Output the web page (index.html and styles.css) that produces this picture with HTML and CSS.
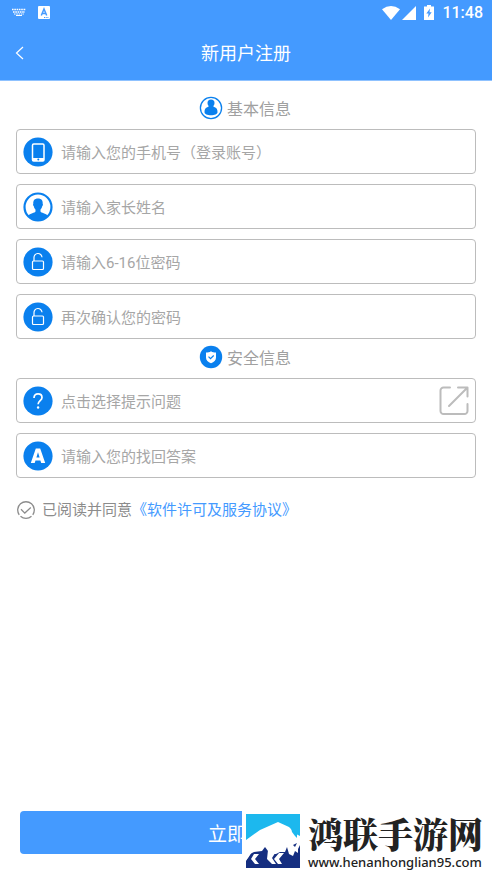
FILE: index.html
```html
<!DOCTYPE html>
<html lang="zh-CN">
<head>
<meta charset="utf-8">
<meta name="viewport" content="width=device-width, initial-scale=1">
<title>新用户注册</title>
<link rel="stylesheet" href="styles.css">
</head>
<body>
<div class="page">
  <header class="header">
    <div class="status">
      <svg class="status-keyboard" width="16" height="9" viewBox="0 0 16 9" fill="none" stroke="#fff" aria-hidden="true">
        <path d="M1 1.5h14M2 4h12" stroke-width="1.5" stroke-dasharray="1.6 .7"/>
        <path d="M3 6h10" stroke-dasharray="1.6 .7"/><path d="M5 7.5h6"/>
      </svg>
      <svg width="12" height="13" viewBox="0 0 12 13" aria-hidden="true">
        <rect width="12" height="13" rx="1" fill="#fff"/>
        <path d="M3.3 9.5 6 3l2.7 6.5M4.4 7.5h3.2" fill="none" stroke="#449aff" stroke-width="1.5"/>
        <path d="M6 11.5h5" stroke="#449aff" stroke-dasharray="1 .7"/>
      </svg>
      <span class="status-right">
        <svg width="18" height="14" viewBox="0 0 18 14" fill="#fff" aria-hidden="true"><path d="M9 14 0 3.2Q9-3 18 3.2Z"/></svg>
        <svg width="14" height="14" viewBox="0 0 14 14" fill="#fff" aria-hidden="true"><path d="M14 0v14H0Z"/></svg>
        <svg class="status-battery" width="10" height="15" viewBox="0 0 10 15" aria-hidden="true"><path d="M0 1.500h3V0h4v1.500h3V15H0Z" fill="#fff"/><path d="M6 3.500 2.300 8.600h2.200L4 12.500l3.700-5.200H5.500Z" fill="#449aff"/></svg>
        <span class="clock">11:48</span>
      </span>
    </div>
    <div class="titlebar">
      <button class="back" type="button" aria-label="返回">
        <svg width="9" height="14" viewBox="0 0 9 14" fill="none" stroke="#fff" stroke-width="1.2" aria-hidden="true"><path d="M8 1 1.500 7 8 13"/></svg>
      </button>
      <h1>新用户注册</h1>
    </div>
  </header>

  <form class="form">
    <h2 class="section">
      <svg width="24" height="24" viewBox="0 0 24 24" aria-hidden="true">
        <circle cx="12" cy="12" r="10.600" fill="none" stroke="#0a80ee" stroke-width="1.300"/>
        <circle cx="12" cy="6.900" r="3.500" fill="#0a80ee"/>
        <path d="M10 9.500h4c.2 1 .8 1.300 1.800 1.700 2 .8 2.800 2.500 2.700 5-.1 1.900-2.800 3-6.500 3s-6.400-1.100-6.500-3c-.1-2.500.7-4.200 2.700-5 1-.4 1.600-.7 1.800-1.700Z" fill="#0a80ee"/>
      </svg>
      基本信息
    </h2>

    <div class="fields">
      <label class="field">
        <svg class="badge" viewBox="0 0 30 30" aria-hidden="true">
          <circle cx="15" cy="15" r="14.600" fill="#0a80ee"/>
          <rect x="9.500" y="7" width="11.500" height="17" rx="1.200" fill="none" stroke="#fff" stroke-width="1.500"/>
          <path d="M9.500 21h11.500v3H9.500Z" fill="#fff"/><circle cx="15.300" cy="22.400" r="1" fill="#0a80ee"/>
        </svg>
        <input type="tel" aria-label="手机号" placeholder="请输入您的手机号（登录账号）">
      </label>
      <label class="field">
        <svg class="badge" viewBox="0 0 30 30" aria-hidden="true">
          <circle cx="15" cy="15" r="13.500" fill="#fff" stroke="#0a80ee" stroke-width="2.200"/>
          <path d="M15 6.500c3.600 0 5 2.200 4.700 5.300.5.600.2 2-.5 2.500-.4 1.800-1 2.700-1.700 3.300v2c.5 1.500 5.500 1.700 7.500 4.400C22.500 27.500 19 29 15 29s-7.500-1.500-10-5c2-2.700 7-2.900 7.500-4.400v-2c-.7-.6-1.300-1.500-1.700-3.300-.7-.5-1-1.900-.5-2.500-.3-3.100 1.100-5.300 4.700-5.300Z" fill="#0a80ee"/>
        </svg>
        <input type="text" aria-label="家长姓名" placeholder="请输入家长姓名">
      </label>
      <label class="field">
        <svg class="badge" viewBox="0 0 30 30" aria-hidden="true">
          <circle cx="15" cy="15" r="14.600" fill="#0a80ee"/>
          <g fill="none" stroke="#fff" stroke-width="1.200"><rect x="9.500" y="14" width="11" height="8.500" rx="1"/><path d="M11 14v-3.200a4 4 0 0 1 8-.6"/></g>
        </svg>
        <input type="password" aria-label="密码" placeholder="请输入6-16位密码">
      </label>
      <label class="field">
        <svg class="badge" viewBox="0 0 30 30" aria-hidden="true">
          <circle cx="15" cy="15" r="14.600" fill="#0a80ee"/>
          <g fill="none" stroke="#fff" stroke-width="1.200"><rect x="9.500" y="14" width="11" height="8.500" rx="1"/><path d="M11 14v-3.200a4 4 0 0 1 8-.6"/></g>
        </svg>
        <input type="password" aria-label="确认密码" placeholder="再次确认您的密码">
      </label>
    </div>

    <h2 class="section">
      <svg width="24" height="24" viewBox="0 0 24 24" aria-hidden="true">
        <circle cx="12" cy="12" r="11.200" fill="#0a80ee"/>
        <path d="M12 6.200c1.500 1 3 1.400 5 1.400v4.800c0 2.800-2 4.600-5 5.900-3-1.300-5-3.100-5-5.900V7.600c2 0 3.500-.4 5-1.400Z" fill="#fff"/>
        <path d="m9.500 11.700 2 2 3.200-3.200" fill="none" stroke="#0a80ee" stroke-width="1.200"/>
      </svg>
      安全信息
    </h2>

    <div class="fields">
      <button class="field" type="button">
        <svg class="badge" viewBox="0 0 30 30" aria-hidden="true">
          <circle cx="15" cy="15" r="14.600" fill="#0a80ee"/>
          <path d="M11 12c0-2.700 1.700-4.200 4-4.200s4 1.400 4 3.600c0 3.100-3.900 3.300-3.900 6.900" fill="none" stroke="#fff" stroke-width="1.700"/>
          <circle cx="15.100" cy="21.500" r="1.200" fill="#fff"/>
        </svg>
        <span class="field-text">点击选择提示问题</span>
        <svg class="open" viewBox="0 0 30 30" fill="none" stroke="#bcbcbc" stroke-width="2" stroke-linecap="round" stroke-linejoin="round" aria-hidden="true">
          <path d="M11 1.500H4.500a3 3 0 0 0-3 3v20.500a3 3 0 0 0 3 3h21a3 3 0 0 0 3-3v-7M19 1.500h9.500v9M28 2 10 20"/>
        </svg>
      </button>
      <label class="field">
        <svg class="badge" viewBox="0 0 30 30" aria-hidden="true">
          <circle cx="15" cy="15" r="14.600" fill="#0a80ee"/>
          <path d="M12.800 7.500h4.400l5 14.500h-4l-.8-2.600h-4.900l-.8 2.600H7.800Zm2.200 3.800-1.600 5.200h3.200Z" fill="#fff" fill-rule="evenodd"/>
        </svg>
        <input type="text" aria-label="找回答案" placeholder="请输入您的找回答案">
      </label>
    </div>

    <div class="agree">
      <input id="agree" class="agree-box" type="checkbox" checked>
      <label class="agree-label" for="agree">
        <svg width="20" height="20" viewBox="0 0 20 20" fill="none" stroke="#8c8c8c" stroke-width="1.300" aria-hidden="true"><path d="M3.200 14.800A8.300 8.300 0 1 1 16.800 14.800M4.500 16.200a8.300 8.300 0 0 0 11 0M5 9.300l3.800 3.800 6-5.600"/></svg>
        已阅读并同意
      </label>
      <a href="#license">《软件许可及服务协议》</a>
    </div>

    <button class="submit" type="submit">立即注册</button>
  </form>

  <aside class="brand">
    <svg class="brand-logo" viewBox="0 0 54 54" aria-hidden="true">
      <path fill="#1cb8ee" d="M0 0H54V30H0Z"/>
      <path fill="#152e80" d="M0 30H54V54H0Z"/>
      <path fill="#fff" d="M0 26 14 16 32 8 43 13 46 16 50 20 54 22V31L52 35V39L49 37 47 42 43 40 41 33 39 38 34 38 30 40H22V37L19 33 16 37 8 38 4 40 0 47Z"/>
      <path fill="#fff" d="M22 36H31L26 44 30 50H26L21 45ZM0 38H6L2 44 0 46ZM8 40H13L9 45 13 50H9L5 45ZM33 39H38L33 45 36 50H32L28 45Z"/>
      <path fill="#1cb8ee" d="M46 9 45 14 46 18 49 22 51 24 51 19 48 17 46 13Z"/>
      <path fill="#152e80" d="M47 31 51 29 49 33Z"/>
    </svg>
    <div class="brand-text">
      <strong>鸿联手游网</strong>
      <span>www.henanhonglian95.com</span>
    </div>
  </aside>
</div>
</body>
</html>
```
FILE: styles.css
```css
* { box-sizing: border-box; }
body {
  margin: 0;
  background: #fff;
  font-family: Roboto, "Noto Sans CJK SC", sans-serif;
}
button, input { font: inherit; }
svg { flex: none; }
.page {
  position: relative;
  display: flex;
  flex-direction: column;
  min-height: 100vh;
}
.header { background: #449aff; color: #fff; border-bottom: 1px solid #8fc2ff; }
.status {
  display: flex;
  align-items: center;
  gap: 11px;
  height: 25px;
  padding: 0 9px 0 11px;
}
.status-right { display: flex; align-items: center; margin-left: auto; gap: 2px; }
.status-battery { margin: 0 6px; }
.clock { font-size: 16px; font-weight: 500; line-height: 24px; }
.titlebar {
  display: grid;
  grid-template-columns: 38px 1fr 38px;
  align-items: center;
  height: 55px;
}
.back {
  display: flex;
  align-items: center;
  justify-content: center;
  height: 40px;
  padding: 0;
  border: 0;
  background: none;
}
.titlebar h1 { margin: 0; padding-top: 2px; font-size: 18px; font-weight: 400; line-height: 24px; text-align: center; }
.form {
  display: flex;
  flex: 1;
  flex-direction: column;
  padding: 9px 16px 20px;
}
.section {
  display: flex;
  align-items: center;
  justify-content: center;
  gap: 4px;
  height: 39px;
  margin: 0;
  padding: 0 2px 4px 0;
  color: #a0a0a0;
  font-size: 16px;
  font-weight: 400;
}
.fields { display: grid; gap: 10px; }
.field {
  display: flex;
  align-items: center;
  gap: 8px;
  width: 100%;
  height: 45px;
  padding: 0 6px;
  border: 1px solid #bcbcbc;
  border-radius: 4px;
  background: #fff;
  color: #a6a6a6;
  font-size: 15px;
  text-align: left;
}
.badge, .open { width: 30px; height: 30px; }
.field input {
  flex: 1;
  min-width: 0;
  height: 30px;
  padding: 2px 0 0;
  border: 0;
  outline: 0;
  background: none;
  color: #333;
}
.field input::placeholder { color: #a6a6a6; opacity: 1; }
.field-text { flex: 1; }
.agree {
  position: relative;
  display: flex;
  align-items: center;
  margin-top: 20px;
  color: #8c8c8c;
  font-size: 15px;
  line-height: 24px;
}
.agree-box { position: absolute; width: 20px; height: 20px; margin: 0; opacity: 0; }
.agree-label { display: flex; align-items: center; gap: 6px; }
.agree a { color: #449aff; text-decoration: none; }
.submit {
  height: 43px;
  margin: auto 4px 0;
  padding: 0;
  border: 0;
  border-radius: 4px;
  background: #449aff;
  color: #fff;
  font-size: 19px;
}
.brand {
  position: absolute;
  right: 0;
  bottom: 0;
  display: flex;
  align-items: center;
  gap: 8px;
  width: 250px;
  height: 66px;
  padding-left: 4px;
  background: #fff;
  color: #222;
}
.brand-logo { width: 54px; height: 54px; }
.brand-text { display: flex; flex-direction: column; }
.brand-text strong { font: 900 35px/42px "Noto Serif CJK SC", "Noto Sans CJK SC", serif; }
.brand-text span { font: 500 13px/16px "Noto Sans", sans-serif; }
```
